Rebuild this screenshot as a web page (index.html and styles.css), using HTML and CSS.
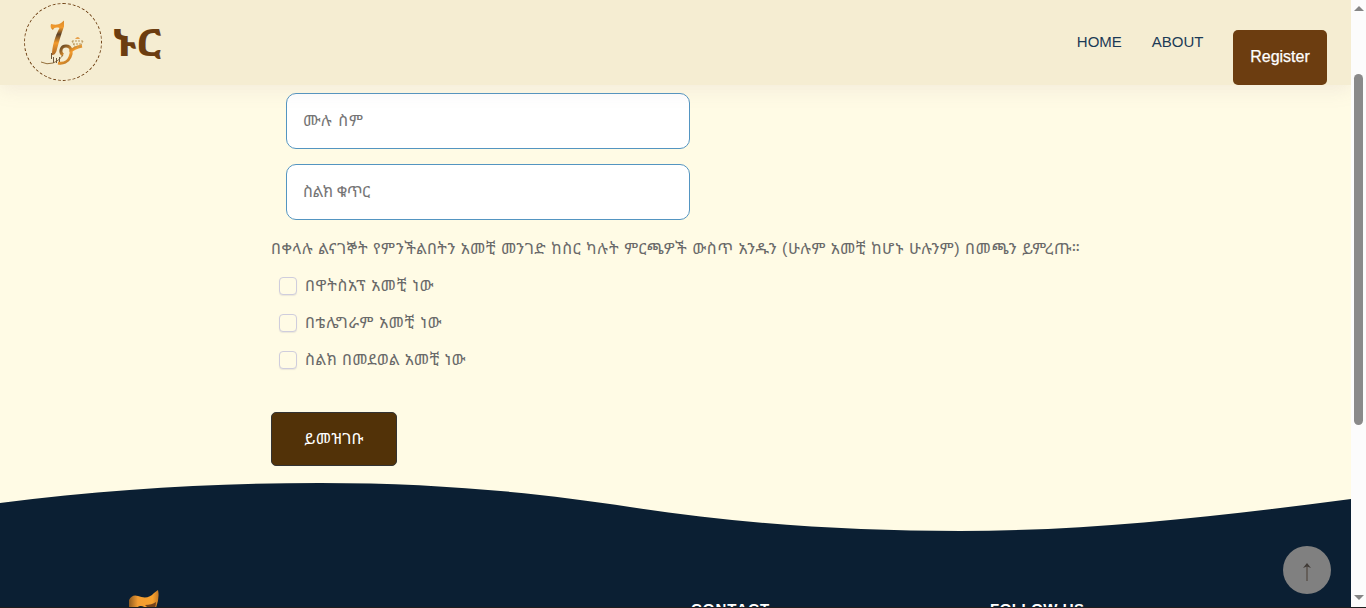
FILE: index.html
```html
<!DOCTYPE html>
<html lang="am">
<head>
<meta charset="utf-8">
<title>ኑር</title>
<link rel="stylesheet" href="styles.css">
</head>
<body>
<div class="window">
  <div class="page">
    <header class="navbar">
      <div class="brand">
        <div class="logo-ring">
          <svg class="logo" viewBox="0 0 48 46" width="48" height="46">
            <defs>
              <linearGradient id="stem" x1="0" y1="0" x2="0" y2="1">
                <stop offset="0" stop-color="#d98a2c"/><stop offset=".2" stop-color="#f39a2b"/>
                <stop offset=".4" stop-color="#5b4127"/><stop offset=".65" stop-color="#f39a2b"/><stop offset="1" stop-color="#a9682a"/>
              </linearGradient>
              <linearGradient id="loop" x1="0" y1="0" x2="1" y2="1">
                <stop offset="0" stop-color="#4d3a25"/><stop offset=".45" stop-color="#f39a2b"/><stop offset="1" stop-color="#7a5426"/>
              </linearGradient>
            </defs>
            <path d="M10 4c4 1 7 1 10-1l3-2.500v6C20 14 18 22 16 29c-1 5-3 6-5 6 0-8 3-19 7.500-27-3-1-5.500-.5-6.500 2-2-1-3-3-2-6z" fill="url(#stem)"/>
            <path d="M22 35c-4-3-2-9 3-9 6 0 6 7 4 11-2 5-7 7-12 6M29 32c3-4 7-5 12-6" fill="none" stroke="url(#loop)" stroke-width="3"/>
            <path d="M0 42q6 3 12 1c5-2 8-5 10-8" fill="none" stroke="#94703c" stroke-width="1"/>
            <path d="M10.500 33v6M12.500 37v6M15.500 38v5M18.500 37v5" stroke="#6b573e" stroke-width="1"/>
            <path d="M31 21h11M32 24h9M34 27h6M31 21l3 6M42 21l-3 6" stroke="#b9965a" stroke-width="1" stroke-dasharray="2 1" fill="none"/>
            <path d="M34 19q3-4 5 0z" fill="#e7a04a"/>
          </svg>
        </div>
        <span class="brand-name">ኑር</span>
      </div>
      <nav class="menu">
        <a class="menu-link">HOME</a>
        <a class="menu-link">ABOUT</a>
        <a class="register">Register</a>
      </nav>
    </header>
    <main class="content">
      <form class="form">
        <input class="field field-name" type="text" placeholder="ሙሉ ስም">
        <input class="field field-phone" type="text" placeholder="ስልክ ቁጥር">
        <p class="hint">በቀላሉ ልናገኞት የምንችልበትን አመቺ መንገድ ከስር ካሉት ምርጫዎች ውስጥ አንዱን (ሁሉም አመቺ ከሆኑ ሁሉንም) በመጫን ይምረጡ።</p>
        <label class="option"><input class="check" type="checkbox"><span class="label-wide">በዋትስአፕ አመቺ ነው</span></label>
        <label class="option"><input class="check" type="checkbox"><span class="label-wide">በቴሌግራም አመቺ ነው</span></label>
        <label class="option"><input class="check" type="checkbox"><span class="label-tight">ስልክ በመደወል አመቺ ነው</span></label>
        <button class="submit" type="button">ይመዝገቡ</button>
      </form>
    </main>
    <svg class="wave" viewBox="0 0 1351 60" preserveAspectRatio="none">
      <path d="M0 23C110 9 215 3 320 3C440 3 540 13 630 27C740 44 850 51 960 51C1090 51 1220 36 1351 19V60H0z" fill="#0b1f33"/>
    </svg>
    <footer class="footer">
      <svg class="footer-logo" viewBox="0 0 32 20" width="32" height="20">
        <defs><linearGradient id="amber" x1="0" x2="1"><stop offset="0" stop-color="#8e5a20"/><stop offset=".3" stop-color="#f29c32"/><stop offset=".8" stop-color="#f7a12d"/><stop offset="1" stop-color="#c37926"/></linearGradient></defs>
        <path d="M1 20V10Q4 4 10 6Q20 10 26 3L30 0Q32 9 27 20H20Q12 12 7 20z" fill="url(#amber)"/>
        <path d="M17 15Q24 15 28 12Q28 16 26 20H22z" fill="#74431c"/>
      </svg>
      <h4 class="footer-title contact">CONTACT</h4>
      <h4 class="footer-title">FOLLOW US</h4>
    </footer>
    <a class="to-top"><svg viewBox="0 0 10 18" width="10" height="18"><path d="M5 1V18" stroke="#554c44" stroke-width="1.300"/><path d="M5 0L9 5L5 3.500L1 5z" fill="#403b37"/></svg></a>
  </div>
  <div class="scrollbar">
    <span class="arrow-up"></span>
    <span class="thumb"></span>
    <span class="arrow-down"></span>
  </div>
</div>
</body>
</html>
```
FILE: styles.css
```css
* { box-sizing: border-box; }
body { margin: 0; font: 16px/24px "Liberation Sans", "Noto Sans Ethiopic", "Noto Sans", sans-serif; color: #696969; }
.window { display: flex; width: 1366px; height: 608px; overflow: hidden; border-bottom: 1px solid #1e1e1e; }
.page { position: relative; display: flex; flex-direction: column; width: 1351px; background: #fffbe5; overflow: hidden; }
.navbar { position: relative; z-index: 2; flex: none; display: flex; justify-content: space-between; height: 85px; padding: 3px 24px 0; background: #f5edd2; box-shadow: 0 5px 18px rgba(160, 130, 150, .13); }
.brand { display: flex; gap: 10px; }
.logo-ring { width: 78px; height: 78px; padding: 16px 0 0 16px; border: 1px dashed #6c3d10; border-radius: 50%; }
.logo { display: block; }
.brand-name { padding-top: 16px; font-size: 38px; line-height: 48px; font-weight: 700; color: #6c3d10; white-space: nowrap; transform: scaleX(1.18); transform-origin: left; }
.menu { display: flex; color: #1c3a56; }
.menu-link { position: relative; left: .5px; margin: 27px 30px 0 0; font-size: 15px; }
.register { width: 94px; height: 55px; margin-top: 27px; border-radius: 5px; background: #6c3d10; color: #fff; line-height: 53px; text-align: center; -webkit-text-stroke: .25px #fff; }
.content { flex: none; height: 395px; padding-left: 271px; }
.form { display: flex; flex-direction: column; align-items: flex-start; padding-top: 8px; }
.field { width: 404px; height: 56px; margin: 0 0 15px 15px; padding: 0 16px 1px; border: 1px solid #5495c1; border-radius: 10px; background: #fff; font: inherit; }
.field::placeholder { color: #757575; }
.field-name { letter-spacing: 1px; }
.field-phone { letter-spacing: -.45px; }
.hint { margin: 2px 0 13px; letter-spacing: .535px; white-space: nowrap; }
.option { display: flex; height: 24px; margin: 0 0 13px 8px; white-space: nowrap; }
.check { appearance: none; flex: none; width: 18px; height: 18px; margin: 3px 8px 0 0; border: 1px solid #cfcddd; border-radius: 4px; background: #fffbe5; box-shadow: 0 1px 1px rgba(90, 90, 140, .12); }
.label-wide { letter-spacing: .7px; }
.label-tight { letter-spacing: .4px; }
.submit { width: 126px; height: 54px; margin-top: 27px; padding: 0 0 1px; border: 1px solid #333; border-radius: 5px; background: #523208; color: #fff; font: inherit; letter-spacing: .2px; white-space: nowrap; }
.wave { flex: none; display: block; width: 1351px; height: 60px; }
.footer { flex: 1; display: grid; grid-template-columns: 563px 299px 1fr; padding-left: 128px; background: #0b1f33; }
.footer-logo { margin-top: 50px; }
.footer-title { margin: 57px 0 0; font-size: 15px; line-height: 24px; letter-spacing: .5px; color: #fff; white-space: nowrap; }
.contact { letter-spacing: 1px; }
.to-top { position: absolute; right: 20px; bottom: 13px; display: flex; align-items: center; justify-content: center; width: 48px; height: 48px; padding-top: 4px; border-radius: 50%; background: #808080; }
.scrollbar { display: flex; flex-direction: column; align-items: center; width: 15px; background: #fcfcfc; }
.arrow-up { margin-top: 6px; border: 5px solid transparent; border-top: 0; border-bottom-color: #858585; }
.thumb { width: 9px; height: 351px; margin: 63px 0 170px; border-radius: 5px; background: #8a8a8a; }
.arrow-down { border: 5px solid transparent; border-bottom: 0; border-top-color: #858585; }
```
